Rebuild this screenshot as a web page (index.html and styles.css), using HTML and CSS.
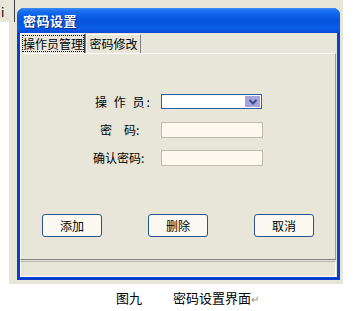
FILE: index.html
```html
<!DOCTYPE html>
<html>
<head>
<meta charset="utf-8">
<link rel="stylesheet" href="styles.css">
</head>
<body>
<div class="sheet">
  <div class="behind"><span class="behind-text">i</span></div>
  <div class="window">
    <div class="titlebar"><span class="title">密码设置</span></div>
    <div class="client">
      <div class="tabs">
        <div class="tab active"><span class="focus">操作员管理</span></div>
        <div class="tab second">密码修改</div>
      </div>
      <div class="panel">
        <div class="form">
          <div class="row">
            <label class="lbl spaced">操 作 员:</label>
            <div class="select"><span class="arrow"><svg width="12" height="10" viewBox="0 0 12 10"><path d="M2.5 3 L6 6.5 L9.5 3" fill="none" stroke="#3a4f8a" stroke-width="2"/></svg></span></div>
          </div>
          <div class="row">
            <label class="lbl spaced2">密&emsp;码:</label>
            <div class="input"></div>
          </div>
          <div class="row">
            <label class="lbl">确认密码:</label>
            <div class="input"></div>
          </div>
        </div>
        <div class="buttons">
          <button class="btn">添加</button>
          <button class="btn">删除</button>
          <button class="btn">取消</button>
        </div>
      </div>
      <div class="status"></div>
    </div>
  </div>
</div>
<p class="caption">图九<span class="gap"></span>密码设置界面<span class="ret">↵</span></p>
</body>
</html>
```
FILE: styles.css
```css
* { box-sizing: border-box; }
body {
  margin: 0;
  background: #ffffff;
  font-family: "Noto Sans CJK SC", "Noto Sans", sans-serif;
  width: 353px;
  height: 311px;
  overflow: hidden;
  position: relative;
}
.sheet {
  margin-left: 9px;
  width: 334px;
  height: 284px;
  background: #e7e6d9;
  padding: 8px 0 0 8px;
  position: relative;
}
.behind {
  position: absolute;
  left: -9px;
  top: 0;
  width: 15px;
  height: 22px;
  border-right: 1px solid #404040;
  background: #e7e6d9;
}
.behind-text {
  font-size: 12px;
  color: #000;
  position: absolute;
  left: 1px;
  top: 3px;
}
.window {
  width: 323px;
  height: 272px;
  background: #0a3fd0;
  border-radius: 7px 7px 0 0;
  padding: 0 3px 3px 3px;
  display: flex;
  flex-direction: column;
}
.titlebar {
  height: 25px;
  margin: 0 -3px;
  border-radius: 7px 7px 0 0;
  background: linear-gradient(180deg, #3b8cf5 0px, #1a6ef0 3px, #0a5ee8 8px, #0755db 14px, #0a5ee8 20px, #0a48d8 25px);
  display: flex;
  align-items: center;
  padding-left: 6px;
}
.title {
  color: #ffffff;
  font-weight: bold;
  font-size: 13px;
  letter-spacing: 0.5px;
  text-shadow: 1px 1px 0 #0a2a80;
}
.client {
  flex: 1;
  background: #e7e6d9;
  display: flex;
  flex-direction: column;
  padding: 0 1px 0 0;
}
.tabs {
  display: flex;
  height: 20px;
  align-items: flex-end;
}
.tab {
  font-size: 12px;
  height: 19px;
  line-height: 17px;
  white-space: nowrap;
  border-top: 1px solid #ffffff;
  border-left: 1px solid #ffffff;
  border-right: 1px solid #808080;
  color: #000;
  background: #e7e6d9;
}
.tab.second { width: 55px; text-align: center; padding: 0; }
.tab.active {
  width: 66px;
  height: 20px;
  padding: 1px 0 0 1px;
  box-shadow: inset -1px 0 0 #404040;
}
.focus {
  border: 1px dotted #000;
  padding: 0;
  line-height: 15px;
  display: inline-block;
  width: 62px;
  text-align: center;
}
.panel {
  height: 207px;
  border-top: 1px solid #ffffff;
  border-left: 1px solid #ffffff;
  border-right: 1px solid #a0a090;
  border-bottom: 1px solid #808080;
  display: flex;
  flex-direction: column;
}
.form {
  margin-top: 40px;
  margin-left: 72px;
  display: flex;
  flex-direction: column;
  gap: 13px;
}
.row {
  display: flex;
  align-items: center;
  height: 15px;
}
.lbl {
  width: 68px;
  font-size: 12px;
  color: #000;
  white-space: pre;
}
.spaced { letter-spacing: 2px; padding-left: 2px; }
.spaced2 { padding-left: 7px; }
.select {
  width: 101px;
  height: 15px;
  border: 1px solid #2f5ea0;
  background: #ffffff;
  display: flex;
  justify-content: flex-end;
  padding: 1px;
}
.arrow {
  width: 15px;
  height: 11px;
  background: #a4a4dc;
  display: flex;
  align-items: center;
  justify-content: center;
}
.input {
  width: 102px;
  height: 16px;
  border: 1px solid #c0bcac;
  background: #fdf9ef;
}
.buttons {
  margin-top: 49px;
  display: flex;
  justify-content: space-between;
  padding: 0 21px 0 21px;
}
.btn {
  width: 60px;
  height: 23px;
  border: 1px solid #2c5290;
  border-radius: 3px;
  background: #fbf9f2;
  font-family: "Noto Sans CJK SC", sans-serif;
  font-size: 12px;
  color: #000;
  padding: 0;
}
.status {
  margin-top: 1px;
  flex: 1;
  border-top: 1px solid #b8b6aa;
  border-left: 1px solid #ffffff;
  border-bottom: 1px solid #ffffff;
  border-right: 1px solid #ffffff;
}
.caption {
  margin: 4px 0 0 116px;
  font-size: 13px;
  color: #000;
}
.gap { display: inline-block; width: 31px; }
.ret { color: #888; font-size: 10px; }
```
